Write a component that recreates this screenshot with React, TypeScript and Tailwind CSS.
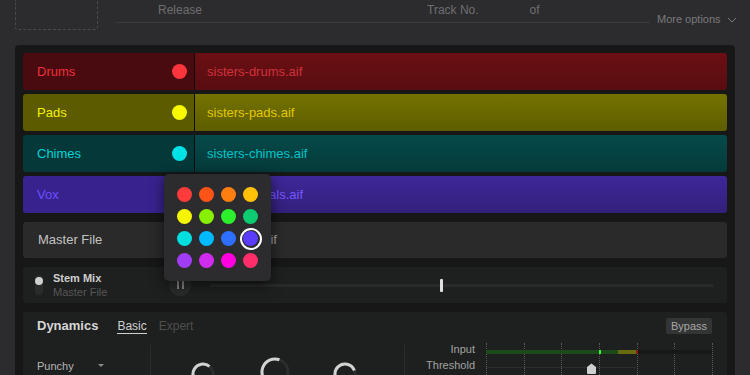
import React from 'react';

type Stem = {
  name: string;
  file: string;
  left: string;
  right: string;
  text: string;
  fileText: string;
  dot?: string;
};

const stems: Stem[] = [
  {
    name: 'Drums',
    file: 'sisters-drums.aif',
    left: 'bg-[#4a0b10]',
    right: 'bg-gradient-to-b from-[#6b0f13] to-[#580d11]',
    text: 'text-[#ee303a]',
    fileText: 'text-[#d0323c]',
    dot: 'bg-[#ff353d]',
  },
  {
    name: 'Pads',
    file: 'sisters-pads.aif',
    left: 'bg-[#5c5b00]',
    right: 'bg-gradient-to-b from-[#747300] to-[#5e5d00]',
    text: 'text-[#f2f200]',
    fileText: 'text-[#e2c800]',
    dot: 'bg-[#f8f800]',
  },
  {
    name: 'Chimes',
    file: 'sisters-chimes.aif',
    left: 'bg-[#053839]',
    right: 'bg-gradient-to-b from-[#064a4a] to-[#053a3a]',
    text: 'text-[#00d4d8]',
    fileText: 'text-[#00c4c8]',
    dot: 'bg-[#00e2e6]',
  },
  {
    name: 'Vox',
    file: 'sisters-vocals.aif',
    left: 'bg-[#38238e]',
    right: 'bg-gradient-to-b from-[#3e279a] to-[#33207a]',
    text: 'text-[#6c4fff]',
    fileText: 'text-[#7458ff]',
  },
];

const palette = [
  '#ff3b3b', '#ff5418', '#ff7e10', '#ffc107',
  '#f5f500', '#86f000', '#2cf02c', '#0dcb70',
  '#00dfe0', '#00baff', '#2f6fff', '#5b3cff',
  '#a13cf5', '#d02cf0', '#ff00e0', '#ff2e6b',
];

const ticks = [0, 37.7, 75.3, 113, 150.7, 188.3, 226];

const StemRow = ({ s }: { s: Stem }) => (
  <div className="flex h-[37px] rounded-[3px] overflow-hidden">
    <div className={`w-[171px] flex items-center justify-between pl-[14px] pr-[7px] ${s.left}`}>
      <span className={`text-[13px] ${s.text}`}>{s.name}</span>
      {s.dot && <span className={`w-[15px] h-[15px] rounded-full ${s.dot}`} />}
    </div>
    <div className="w-px bg-[#0c0c0c]" />
    <div className={`flex-1 flex items-center pl-[12px] ${s.right}`}>
      <span className={`text-[13px] ${s.fileText}`}>{s.file}</span>
    </div>
  </div>
);

const Knob = ({ size, end }: { size: number; end: number }) => {
  const r = size / 2 - 2;
  const c = size / 2;
  const start = 200;
  const rad = (a: number) => (a * Math.PI) / 180;
  const pt = (a: number) => [c + r * Math.cos(rad(a - 90)), c + r * Math.sin(rad(a - 90))];
  const [x1, y1] = pt(start);
  const [x2, y2] = pt(end);
  const sweep = (end - start + 360) % 360;
  return (
    <svg width={size} height={size} viewBox={`0 0 ${size} ${size}`}>
      <circle cx={c} cy={c} r={r} fill="none" stroke="#2c2d2d" strokeWidth="3" />
      <path
        d={`M ${x1} ${y1} A ${r} ${r} 0 ${sweep > 180 ? 1 : 0} 1 ${x2} ${y2}`}
        fill="none"
        stroke="#d2d2d2"
        strokeWidth="3"
      />
    </svg>
  );
};

export default function App() {
  return (
    <div
      className="w-[750px] h-[375px] overflow-hidden bg-[#2c2c2e] relative"
      style={{ fontFamily: '"Liberation Sans", Arial, sans-serif' }}
    >
      {/* header */}
      <div className="h-[45px] flex">
        <div className="ml-[15px] w-[83px] h-[30px] border border-t-0 border-dashed border-[#4a4a4c] rounded-b-[3px]" />
        <div className="flex-1 flex items-start">
          <div className="ml-[17px] w-[535px] h-[23px] border-b border-[#3a3a3c] flex items-start text-[12px] text-[#6e6e70]">
            <span className="ml-[43px] mt-[1px]">Release</span>
            <span className="ml-[225px] mt-[1px]">Track No.</span>
            <span className="ml-[51px] mt-[1px]">of</span>
          </div>
          <div className="ml-[7px] mt-[11px] flex items-center text-[11px] text-[#7a7a7c]">
            <span>More options</span>
            <svg width="10" height="6" viewBox="0 0 10 6" className="ml-[6px] mt-[2px]">
              <path d="M1 1 L5 5 L9 1" fill="none" stroke="#7a7a7c" strokeWidth="1" />
            </svg>
          </div>
        </div>
      </div>

      {/* main panel */}
      <div className="mx-[15px] w-[720px] h-[340px] bg-[#171717] rounded-[4px] px-[8px] pt-[8px]">
        <div className="flex flex-col gap-[4px]">
          {stems.map((s) => (
            <StemRow key={s.name} s={s} />
          ))}
        </div>

        <div className="mt-[9px] h-[36px] rounded-[3px] bg-[#2a2a2a] flex items-center">
          <span className="w-[199px] pl-[15px] text-[13px] text-[#c2c2c2]">Master File</span>
          <span className="text-[13px] text-[#a4a4a4]">sisters.aif</span>
        </div>

        <div className="mt-[9px] h-[36px] rounded-[3px] bg-[#1e1f1f] flex items-center">
          <div className="ml-[12px] w-[8px] h-[20px] rounded-full bg-[#2a2b2b] relative">
            <span className="absolute left-0 top-[2px] w-[8px] h-[8px] rounded-full bg-[#cfcfcf]" />
          </div>
          <div className="ml-[10px] w-[116px] flex flex-col leading-[14px]">
            <span className="text-[11px] font-bold text-[#cfcfcf]">Stem Mix</span>
            <span className="text-[11px] text-[#565656]">Master File</span>
          </div>
          <div className="w-[22px] h-[22px] rounded-full bg-[#2a2b2b] flex items-center justify-center gap-[3px]">
            <span className="w-[2px] h-[8px] bg-[#8a8a8a]" />
            <span className="w-[2px] h-[8px] bg-[#8a8a8a]" />
          </div>
          <div className="ml-[19px] w-[503px] h-[3px] bg-[#2a2a2a] relative">
            <span className="absolute left-[230px] top-[-5px] w-[3px] h-[13px] bg-[#e0e0e0] rounded-[1px]" />
          </div>
        </div>

        {/* dynamics */}
        <div className="mt-[9px] h-[80px] rounded-[3px] bg-[#1e1f1f] px-[14px] pt-[6px]">
          <div className="flex items-center h-[16px]">
            <span className="text-[13px] font-bold text-[#d6d6d6]">Dynamics</span>
            <span className="ml-[19px] text-[12px] text-[#d0d0d0] border-b border-[#d0d0d0] leading-[14px]">Basic</span>
            <span className="ml-[12px] text-[12px] text-[#4e4e4e]">Expert</span>
            <span className="ml-auto mr-[1px] bg-[#333434] text-[11px] text-[#a8a8a8] px-[5px] h-[16px] flex items-center rounded-[2px]">
              Bypass
            </span>
          </div>
          <div className="flex mt-[11px] h-[60px]">
            <div className="w-[113px] pt-[13px] flex items-start">
              <span className="text-[11px] text-[#b6b6b6]">Punchy</span>
              <svg width="6" height="4" viewBox="0 0 6 4" className="ml-[24px] mt-[6px]">
                <path d="M0 0 L6 0 L3 3 Z" fill="#8a8a8a" />
              </svg>
            </div>
            <div className="w-px bg-[#2b2c2c]" />
            <div className="w-[254px] flex items-start">
              <div className="ml-[40px] mt-[17px]"><Knob size={24} end={40} /></div>
              <div className="ml-[45px] mt-[12px]"><Knob size={30} end={20} /></div>
              <div className="ml-[43px] mt-[17px]"><Knob size={24} end={70} /></div>
            </div>
            <div className="w-px bg-[#2b2c2c]" />
            <div className="flex-1 flex">
              <div className="w-[70px] flex flex-col items-end text-[11px] text-[#a2a2a2] leading-[16px] mt-[-4px]">
                <span>Input</span>
                <span>Threshold</span>
              </div>
              <div className="ml-[11px] w-[227px] relative">
                {ticks.map((x) => (
                  <span
                    key={x}
                    className="absolute top-[-2px] h-[40px] border-l border-dotted border-[#5a5a5a]"
                    style={{ left: x }}
                  />
                ))}
                <div className="absolute left-0 top-[5px] w-[226px] h-[4px] bg-[#161717] flex">
                  <span className="w-[113px] h-full bg-[#1c4a1a]" />
                  <span className="w-[2px] h-full bg-[#3cf03c]" />
                  <span className="w-[17px] h-full bg-[#1c4a1a]" />
                  <span className="w-[18px] h-full bg-[#6a6a12]" />
                  <span className="w-[2px] h-full bg-[#8a1a1a]" />
                </div>
                <div className="absolute left-0 top-[22px] w-[150px] h-px bg-[#2c2d2d]" />
                <svg width="11" height="11" viewBox="0 0 11 11" className="absolute left-[100px] top-[18px]">
                  <path d="M1 4 L5.5 0.5 L10 4 L10 10 Q10 11 9 11 L2 11 Q1 11 1 10 Z" fill="#cfcfcf" />
                </svg>
              </div>
            </div>
          </div>
        </div>
      </div>

      {/* colour popup */}
      <div className="absolute left-[164px] top-[174px] w-[107px] h-[107px] rounded-[5px] bg-[#2c2c2e] shadow-[0_4px_14px_rgba(0,0,0,0.6)] grid grid-cols-4 content-center justify-items-center gap-y-[7px] px-[9px]">
        {palette.map((c, i) => (
          <div key={c} className="w-[22px] h-[15px] flex items-center justify-center">
            {i === 11 ? (
              <span className="w-[22px] h-[22px] rounded-full border-2 border-white flex items-center justify-center shrink-0">
                <span className="w-[15px] h-[15px] rounded-full" style={{ backgroundColor: c }} />
              </span>
            ) : (
              <span className="w-[15px] h-[15px] rounded-full" style={{ backgroundColor: c }} />
            )}
          </div>
        ))}
      </div>
    </div>
  );
}
